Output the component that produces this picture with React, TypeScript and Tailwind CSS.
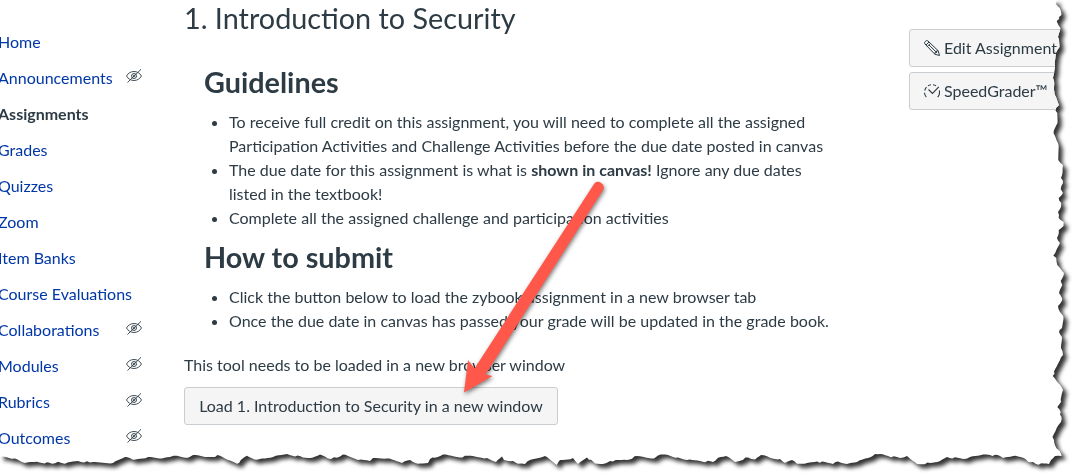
import React from "react";

const tornEdge: [number, number][] = [
  [0, 0], [1057, 0], [1055.7, 4], [1059.7, 8], [1061.5, 15], [1056.7, 21], [1060.5, 28], [1058, 37], [1059.5, 47],
  [1055.7, 55], [1055, 67], [1053, 78], [1054, 87], [1056, 97], [1059, 105], [1056, 108], [1057.5, 123], [1053.5, 133],
  [1058, 143], [1058.3, 160], [1063, 165], [1062.6, 172], [1061, 178], [1063, 183], [1060.7, 189], [1063, 193],
  [1058.7, 198], [1061.3, 203], [1061, 207], [1058, 212], [1058.7, 218], [1063.7, 222], [1063.5, 226], [1058.7, 230],
  [1057, 238], [1060, 243], [1056, 251], [1053.3, 255.5], [1056.3, 258], [1057.3, 265], [1064, 273], [1060.7, 281],
  [1062.3, 285], [1059, 293], [1062.3, 299], [1058, 306], [1060, 312], [1063.3, 316], [1062, 328], [1059, 332],
  [1062, 337], [1061, 348], [1063, 355], [1060, 360], [1052.7, 376], [1057.3, 382], [1063, 390], [1061, 402],
  [1057.3, 407], [1060.7, 412], [1061, 422], [1056.7, 428], [1052.5, 437], [1054.3, 443], [1061.7, 456], [1055, 456],
  [1051, 460], [1049, 464], [1036, 464], [1033, 462], [1028, 461.7], [1023, 457.7], [1013, 456], [1003, 458],
  [1000, 456], [990, 455], [983, 454.5], [970, 457], [963, 459], [947, 457], [940, 461], [930, 463], [917, 464],
  [913, 461], [907, 456], [900, 458], [888, 456], [880, 454], [875, 454], [868, 458], [857, 462], [847, 464],
  [838, 461.5], [833, 464], [817, 461.5], [807, 463], [797, 463.7], [792, 460], [785, 463], [780, 459], [770, 457.7],
  [761, 455], [755, 459.5], [748, 457.5], [735, 462], [726, 456], [718, 457.7], [713, 462], [700, 461], [687, 460],
  [678, 457.5], [668, 455], [658, 455.5], [654, 458.5], [637, 456], [627, 460], [610, 461], [605, 463.5], [595, 463.5],
  [587, 457.5], [578, 464], [573, 458], [560, 460], [556.7, 465], [545, 456], [530, 460], [525, 464], [518, 463.7],
  [513, 461], [504, 460], [502, 456.5], [496, 462], [487, 458], [473, 456], [457, 457], [443, 454.5], [435, 457.7],
  [430, 459], [428, 463], [418, 463.7], [410, 460], [402, 463], [387, 458.5], [373, 458], [370, 461], [358, 460],
  [343, 454.5], [337, 457.7], [328, 458.5], [320, 454.5], [313, 457.5], [303, 457.5], [287, 454], [273, 457],
  [257, 459.7], [247, 455.7], [237, 463.7], [230, 460.5], [220, 455.7], [205, 457], [193, 455], [188, 457.7],
  [177, 455.7], [170, 457], [162, 458.5], [148, 457], [133, 459.7], [125, 457], [113, 463], [90, 462.5], [78, 461],
  [65, 463.7], [58, 461.7], [52, 463.7], [37, 461.7], [25, 463], [15, 458.5], [6, 457], [0, 457],
];

// Adds fine teeth between the main vertices so the paper edge looks ripped.
function roughen(points: [number, number][]) {
  const out: string[] = [];
  points.forEach(([x, y], i) => {
    out.push(`${x}px ${y}px`);
    const next = points[i + 1];
    if (!next || i === 0) return;
    const length = Math.hypot(next[0] - x, next[1] - y);
    const steps = Math.floor(length / 2.5);
    for (let s = 1; s < steps; s++) {
      const t = s / steps;
      const jag = ((((i * 7 + s * 5) * 13) % 11) / 10 - 0.5) * 1.6;
      const right = x > 1050 && y < 450;
      const px = x + (next[0] - x) * t + (right ? jag : 0);
      const py = y + (next[1] - y) * t + (right ? 0 : jag);
      out.push(`${px.toFixed(1)}px ${py.toFixed(1)}px`);
    }
  });
  return `polygon(${out.join(",")})`;
}

const navItems = [
  { label: "Home" },
  { label: "Announcements", hidden: true },
  { label: "Assignments", active: true },
  { label: "Grades" },
  { label: "Quizzes" },
  { label: "Zoom" },
  { label: "Item Banks" },
  { label: "Course Evaluations" },
  { label: "Collaborations", hidden: true },
  { label: "Modules", hidden: true },
  { label: "Rubrics", hidden: true },
  { label: "Outcomes", hidden: true },
];

function HiddenIcon() {
  return (
    <svg className="mb-[5px] h-4 w-4" viewBox="0 0 16 16" fill="none" stroke="#2d3b45" strokeWidth="0.9">
      <path d="M.5 8C2 5.200 4.800 3.500 8 3.500S14 5.200 15.500 8C14 10.800 11.200 12.500 8 12.500S2 10.800.500 8Z" />
      <circle cx="8" cy="8" r="2.500" />
      <circle cx="8" cy="8" r="0.800" />
      <path d="M1.500 14.500 15 1.300" />
    </svg>
  );
}

function PencilIcon() {
  return (
    <svg className="h-4 w-4 shrink-0" viewBox="0 0 16 16" fill="none" stroke="#2d3b45" strokeWidth="1" strokeLinejoin="round">
      <path d="M.8 3.800Q0 2.700 1.300 1.400T3.800.800L14.200 10.800 15.500 15.500 10.800 14.200Z" />
      <path d="M2 5 5 2M3.400 6.400 6.400 3.400M5 5 12.700 12.500M10.800 14.200 11.200 12.300 12.600 12.400 12.500 11 14.200 10.800" />
    </svg>
  );
}

function GaugeIcon() {
  return (
    <svg className="h-4 w-4 shrink-0" viewBox="0 0 16 16" fill="none" stroke="#2d3b45" strokeWidth="1.100">
      <path d="M2.300 14.200A7.500 7.500 0 0 1 .5 9.800M.7 7.500A7.500 7.500 0 0 1 2.500 4.200M4 2.800A7.500 7.500 0 0 1 7 1.700M9 1.700A7.500 7.500 0 0 1 12 2.800M15.300 7.500A7.500 7.500 0 0 1 13.700 14.200" />
      <path d="M4.500 6.500 8.500 10.500 14.800 3.800" />
    </svg>
  );
}

export default function App() {
  return (
    <div className="relative h-[475px] w-[1074px] overflow-hidden bg-white font-['Lato',sans-serif] text-base leading-6 text-[#2d3b45]">
      <div className="h-full drop-shadow-[4px_4px_2px_rgba(0,0,0,0.8)]">
        <div className="flex h-full bg-white" style={{ clipPath: roughen(tornEdge) }}>
          <nav className="-ml-[2px] w-[186px] shrink-0 pt-6">
            <ul>
              {navItems.map((item) => (
                <li key={item.label} className="flex h-9 w-[144px] items-center justify-between whitespace-nowrap">
                  <a className={item.active ? "font-bold" : "text-[#0037a7]"}>{item.label}</a>
                  {item.hidden && <HiddenIcon />}
                </li>
              ))}
            </ul>
          </nav>

          <main className="w-[725px] shrink-0">
            <h1 className="h-9 text-[28.800px] leading-9">1. Introduction to Security</h1>
            <section className="w-[650px] pl-5">
              <h2 className="mt-7 h-9 text-[28.800px] leading-9 font-bold">Guidelines</h2>
              <ul className="mt-[10px] list-disc pl-[25px] [word-spacing:0.08px]">
                <li>
                  To receive full credit on this assignment, you will need to complete all the assigned
                  <br />
                  Participation Activities and Challenge Activities before the due date posted in canvas
                </li>
                <li>
                  The due date for this assignment is what is <strong>shown in canvas!</strong> Ignore any due dates
                  <br />
                  listed in the textbook!
                </li>
                <li>Complete all the assigned challenge and participation activities</li>
              </ul>
              <h2 className="mt-[9px] h-9 text-[28.800px] leading-9 font-bold">How to submit</h2>
              <ul className="mt-[10px] list-disc pl-[25px] [word-spacing:0.05px]">
                <li>Click the button below to load the zybook assignment in a new browser tab</li>
                <li>Once the due date in canvas has passed your grade will be updated in the grade book.</li>
              </ul>
            </section>
            <p className="mt-5">This tool needs to be loaded in a new browser window</p>
            <button className="mt-[10px] h-[38px] w-[374px] rounded-[3px] border border-[#c7cdd1] bg-[#f5f5f5] whitespace-nowrap">
              Load 1. Introduction to Security in a new window
            </button>
          </main>

          <aside className="flex w-[180px] shrink-0 flex-col gap-[5px] pt-[29px]">
            <button className="flex h-[38px] items-center gap-1 rounded-[3px] border border-[#c7cdd1] bg-[#f5f5f5] pl-[14px] whitespace-nowrap">
              <PencilIcon />
              Edit Assignment
            </button>
            <button className="flex h-[38px] items-center gap-1 rounded-[3px] border border-[#c7cdd1] bg-[#f5f5f5] pl-[14px] whitespace-nowrap">
              <GaugeIcon />
              SpeedGrader™
            </button>
          </aside>
        </div>
      </div>
      <svg
        className="pointer-events-none absolute top-[170px] left-[450px] drop-shadow-[1px_2px_2px_rgba(0,0,0,0.5)]"
        width="170"
        height="235"
        viewBox="450 170 170 235"
        fill="#ff584a"
      >
        <path d="M594.500 183.200A5.700 5.700 0 0 1 603.500 189.300L485.500 374.500 492.500 376 464 392.500 468 360 474.500 368.500Z" />
      </svg>
    </div>
  );
}
